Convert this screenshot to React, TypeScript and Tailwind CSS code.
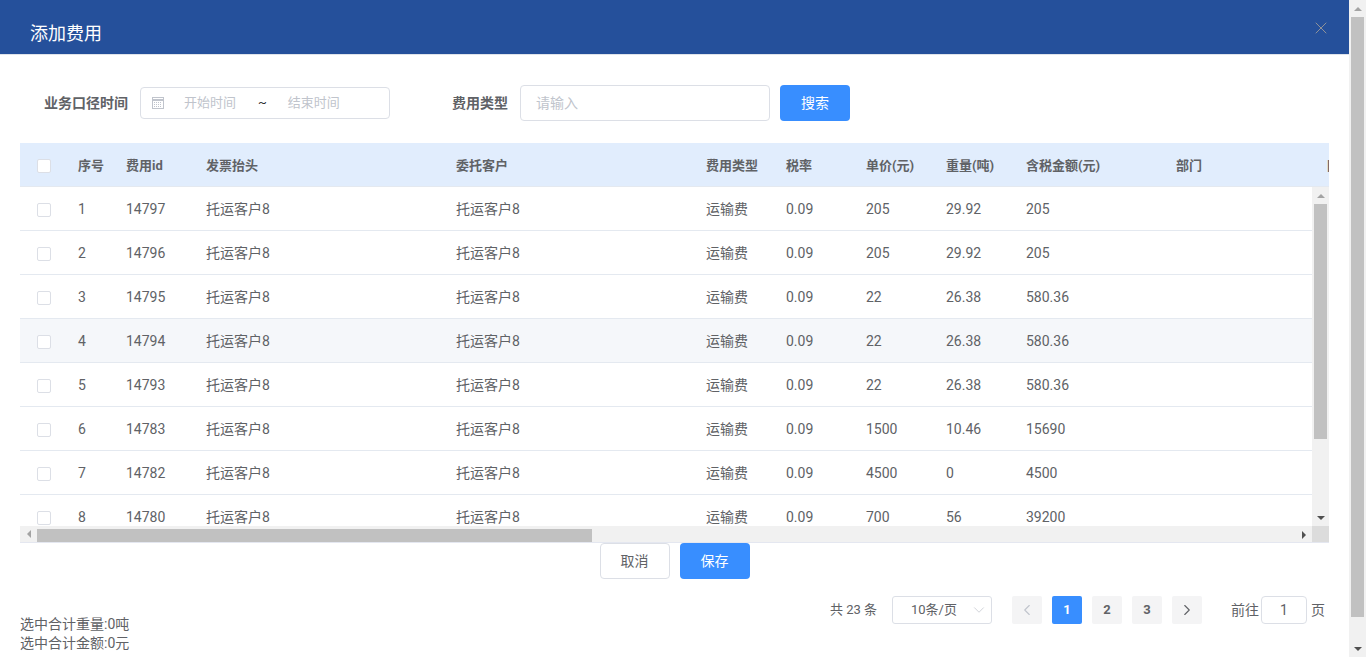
import { ChevronDown, ChevronLeft, ChevronRight, X } from "lucide-react";

const cols = "grid grid-cols-[48px_48px_80px_250px_250px_80px_80px_80px_80px_150px_150px_150px]";

const rows = [
  ["1", "14797", "205", "29.92", "205"],
  ["2", "14796", "205", "29.92", "205"],
  ["3", "14795", "22", "26.38", "580.36"],
  ["4", "14794", "22", "26.38", "580.36"],
  ["5", "14793", "22", "26.38", "580.36"],
  ["6", "14783", "1500", "10.46", "15690"],
  ["7", "14782", "4500", "0", "4500"],
  ["8", "14780", "700", "56", "39200"],
];

const headers = ["序号", "费用id", "发票抬头", "委托客户", "费用类型", "税率", "单价(元)", "重量(吨)", "含税金额(元)", "部门", "日期"];

function Checkbox() {
  return <span className="block mt-[1px] w-[14px] h-[14px] bg-white border border-[#dcdfe6] rounded-[2px]" />;
}

function Arrow({ dir, dark }: { dir: "up" | "down" | "left" | "right"; dark?: boolean }) {
  const points = {
    up: "0,4 4,0 8,4",
    down: "0,0 8,0 4,4",
    left: "4,0 4,8 0,4",
    right: "0,0 4,4 0,8",
  }[dir];
  const vertical = dir === "up" || dir === "down";
  return (
    <svg width={vertical ? 8 : 4} height={vertical ? 4 : 8} viewBox={vertical ? "0 0 8 4" : "0 0 4 8"}>
      <polygon points={points} fill={dark ? "#505050" : "#a3a3a3"} />
    </svg>
  );
}

function PageButton({ children, active }: { children: React.ReactNode; active?: boolean }) {
  return (
    <span
      className={
        active
          ? "w-[30px] h-[28px] flex items-center justify-center rounded-[2px] bg-[#388eff] text-white text-[13px] font-bold"
          : "w-[30px] h-[28px] flex items-center justify-center rounded-[2px] bg-[#f4f4f5] text-[#606266] text-[13px] font-bold"
      }
    >
      {children}
    </span>
  );
}

export default function App() {
  return (
    <div className="flex h-[657px] overflow-hidden bg-white text-[#606266] font-['Roboto','Noto_Sans_CJK_SC',sans-serif]">
      <div className="w-[1349px] shrink-0">
        {/* header */}
        <div className="h-[55px] flex items-center justify-between pl-[30px] pr-[18px] bg-[#25509b] border-b border-[#dfe3ea]">
          <span className="text-[18px] text-white mt-[12px]">添加费用</span>
          <X size={20} strokeWidth={1.2} className="text-[#909399] mt-[2px]" />
        </div>

        {/* search */}
        <div className="h-[88px] flex items-start pl-[44px] pt-[30px]">
          <span className="w-[96px] h-[36px] flex items-center text-[14px] font-bold">业务口径时间</span>
          <div className="w-[250px] h-[32px] mt-[2px] flex items-center border border-[#dcdfe6] rounded-[4px] text-[13px]">
            <svg width="14" height="14" viewBox="0 0 14 14" fill="none" stroke="#c0c4cc" className="ml-[10px]">
              <rect x="1.5" y="1.5" width="11" height="11" />
              <path d="M1.5 3.5h11M1.5 4.5h11" />
              <path d="M3 6.5h8M3 8.5h8M3 10.5h8" strokeDasharray="1 1" />
            </svg>
            <span className="ml-[19px] w-[74px] text-[#c0c4cc]">开始时间</span>
            <span className="text-[#303133]">~</span>
            <span className="ml-[21px] text-[#c0c4cc]">结束时间</span>
          </div>
          <span className="ml-[62px] w-[68px] h-[36px] flex items-center text-[14px] font-bold">费用类型</span>
          <div className="w-[250px] h-[36px] flex items-center pl-[15px] border border-[#dcdfe6] rounded-[4px] text-[14px] text-[#c0c4cc]">
            请输入
          </div>
          <button className="ml-[10px] w-[70px] h-[36px] rounded-[4px] bg-[#388eff] text-white text-[14px]">搜索</button>
        </div>

        {/* table */}
        <div className="mx-[20px] w-[1309px] border-b border-[#e4e7f0]">
          <div className={`${cols} h-[44px] pt-[2px] items-center bg-[#e1edfd] border-b border-[#e4e9f0] overflow-hidden text-[13px] font-bold`}>
            <span className="pl-[17px]">
              <Checkbox />
            </span>
            {headers.map((h) => (
              <span key={h} className="pl-[10px] whitespace-nowrap">
                {h}
              </span>
            ))}
          </div>
          <div className="flex h-[339px]">
            <div className="w-[1292px] overflow-hidden">
              {rows.map((r, i) => (
                <div
                  key={r[0]}
                  className={
                    i === 3
                      ? `${cols} h-[44px] pt-[2px] shrink-0 items-center bg-[#f5f7fa] border-b border-[#e4e9f0] text-[14px]`
                      : `${cols} h-[44px] pt-[2px] shrink-0 items-center bg-white border-b border-[#e4e9f0] text-[14px]`
                  }
                >
                  <span className="pl-[17px]">
                    <Checkbox />
                  </span>
                  <span className="pl-[10px]">{r[0]}</span>
                  <span className="pl-[10px]">{r[1]}</span>
                  <span className="pl-[10px]">托运客户8</span>
                  <span className="pl-[10px]">托运客户8</span>
                  <span className="pl-[10px]">运输费</span>
                  <span className="pl-[10px]">0.09</span>
                  <span className="pl-[10px]">{r[2]}</span>
                  <span className="pl-[10px]">{r[3]}</span>
                  <span className="pl-[10px]">{r[4]}</span>
                </div>
              ))}
            </div>
            {/* table vertical scrollbar */}
            <div className="w-[17px] flex flex-col items-center bg-[#f1f1f1]">
              <span className="h-[17px] flex items-center justify-center">
                <Arrow dir="up" />
              </span>
              <span className="w-[13px] h-[235px] bg-[#c1c1c1]" />
              <span className="flex-1 flex items-end pb-[6px]">
                <Arrow dir="down" dark />
              </span>
            </div>
          </div>
          {/* table horizontal scrollbar */}
          <div className="flex h-[16px] bg-[#f1f1f1]">
            <span className="w-[17px] flex items-center justify-center">
              <Arrow dir="left" />
            </span>
            <div className="w-[1275px] flex items-center pt-[2px]">
              <span className="w-[555px] h-[13px] bg-[#c1c1c1]" />
              <span className="flex-1 flex justify-end pr-[6px]">
                <Arrow dir="right" dark />
              </span>
            </div>
            <span className="w-[17px] bg-[#dcdcdc]" />
          </div>
        </div>

        {/* actions */}
        <div className="flex justify-center gap-[10px] text-[14px]">
          <button className="w-[70px] h-[36px] bg-white border border-[#dcdfe6] rounded-[4px]">取消</button>
          <button className="w-[70px] h-[36px] bg-[#388eff] text-white rounded-[4px]">保存</button>
        </div>

        {/* footer */}
        <div className="flex justify-between pl-[20px] pr-[24px]">
          <div className="pt-[36px] text-[14px] leading-[19px]">
            <p>选中合计重量:0吨</p>
            <p>选中合计金额:0元</p>
          </div>
          <div className="flex items-center h-[28px] mt-[17px] text-[13px]">
            <span>共 23 条</span>
            <span className="ml-[15px] w-[100px] h-[28px] flex items-center justify-between pl-[18px] pr-[3px] border border-[#dcdfe6] rounded-[3px]">
              10条/页
              <ChevronDown size={18} strokeWidth={1} className="text-[#c0c4cc]" />
            </span>
            <span className="ml-[20px] flex gap-[10px]">
              <PageButton>
                <ChevronLeft size={18} strokeWidth={1.5} className="text-[#c0c4cc]" />
              </PageButton>
              <PageButton active>1</PageButton>
              <PageButton>2</PageButton>
              <PageButton>3</PageButton>
              <PageButton>
                <ChevronRight size={18} strokeWidth={1.5} />
              </PageButton>
            </span>
            <span className="ml-[29px] text-[14px]">前往</span>
            <span className="ml-[2px] w-[46px] h-[28px] flex items-center justify-center border border-[#dcdfe6] rounded-[4px] text-[14px]">1</span>
            <span className="ml-[4px] text-[14px]">页</span>
          </div>
        </div>
      </div>

      {/* page scrollbar */}
      <div className="w-[17px] flex flex-col items-center bg-[#f1f1f1]">
        <span className="h-[17px] flex items-center justify-center">
          <Arrow dir="up" />
        </span>
        <span className="w-[13px] h-[600px] bg-[#c1c1c1]" />
        <span className="flex-1 flex items-end pb-[6px]">
          <Arrow dir="down" dark />
        </span>
      </div>
    </div>
  );
}
